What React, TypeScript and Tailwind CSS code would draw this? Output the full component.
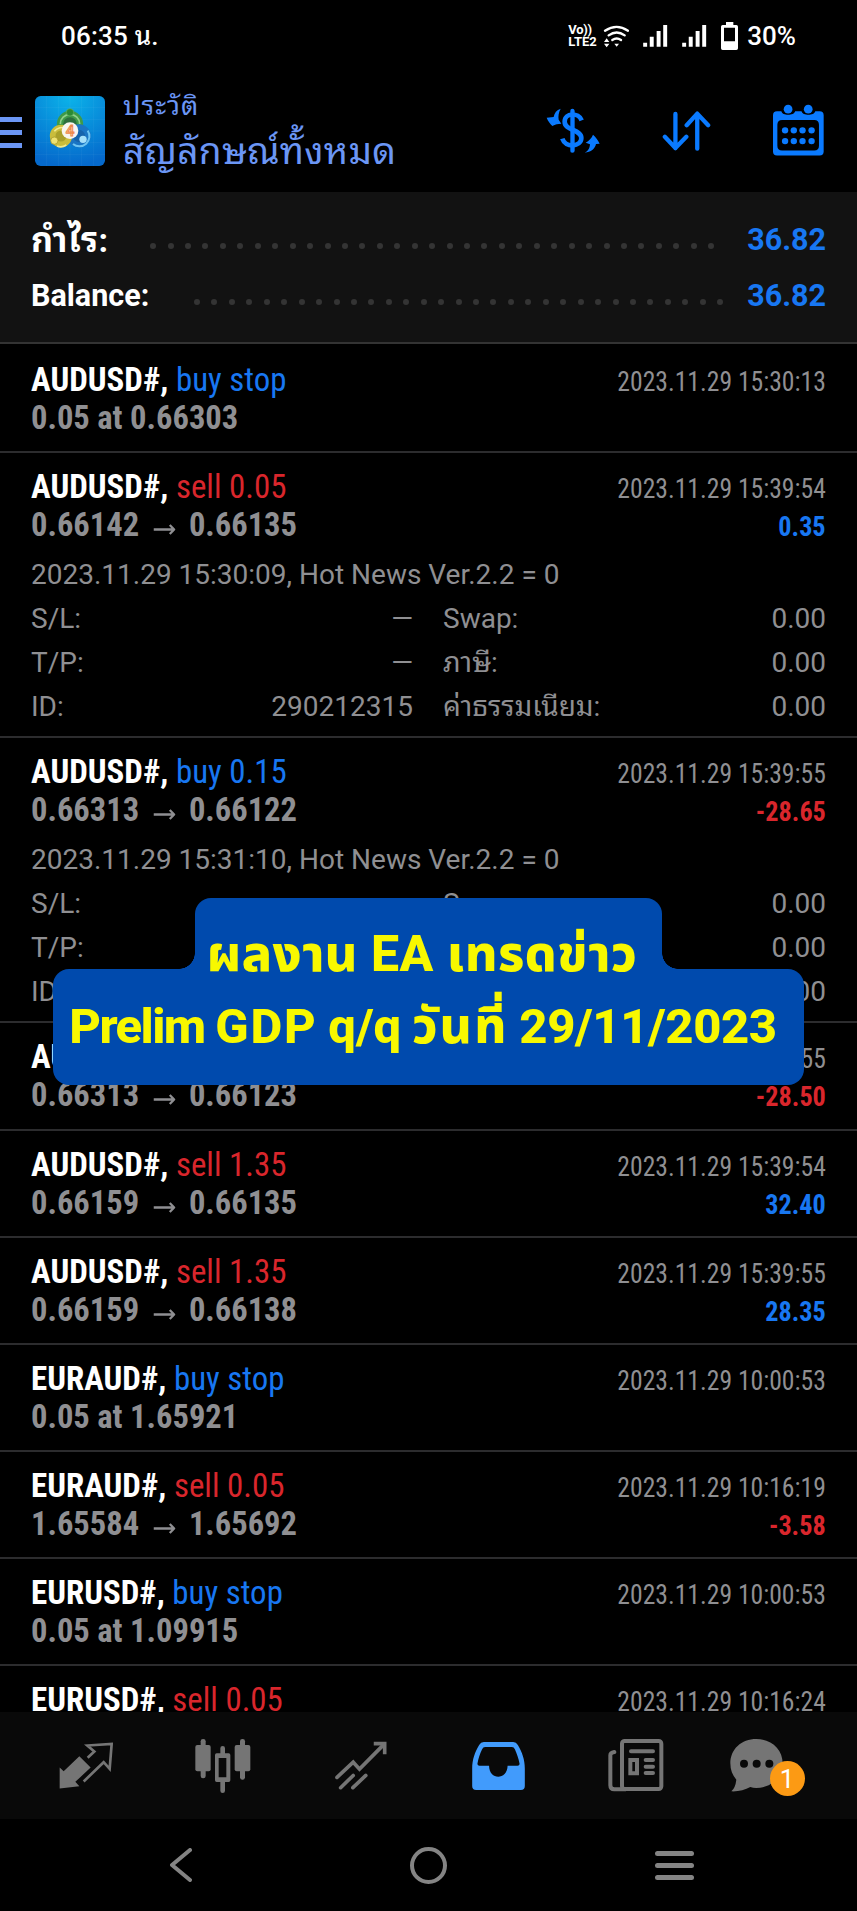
import type { ReactNode } from "react";

interface Deal {
  symbol: string;
  side: "buy" | "sell";
  action: string;
  time: string;
  price?: string;
  open?: string;
  close?: string;
  profit?: string;
  comment?: string;
  id?: string;
}

const deals: Deal[] = [
  { symbol: "AUDUSD#", side: "buy", action: "buy stop", time: "2023.11.29 15:30:13", price: "0.05 at 0.66303" },
  {
    symbol: "AUDUSD#",
    side: "sell",
    action: "sell 0.05",
    time: "2023.11.29 15:39:54",
    open: "0.66142",
    close: "0.66135",
    profit: "0.35",
    comment: "2023.11.29 15:30:09, Hot News Ver.2.2 = 0",
    id: "290212315",
  },
  {
    symbol: "AUDUSD#",
    side: "buy",
    action: "buy 0.15",
    time: "2023.11.29 15:39:55",
    open: "0.66313",
    close: "0.66122",
    profit: "-28.65",
    comment: "2023.11.29 15:31:10, Hot News Ver.2.2 = 0",
  },
  { symbol: "AUDUSD#", side: "buy", action: "buy 0.15", time: "2023.11.29 15:39:55", open: "0.66313", close: "0.66123", profit: "-28.50" },
  { symbol: "AUDUSD#", side: "sell", action: "sell 1.35", time: "2023.11.29 15:39:54", open: "0.66159", close: "0.66135", profit: "32.40" },
  { symbol: "AUDUSD#", side: "sell", action: "sell 1.35", time: "2023.11.29 15:39:55", open: "0.66159", close: "0.66138", profit: "28.35" },
  { symbol: "EURAUD#", side: "buy", action: "buy stop", time: "2023.11.29 10:00:53", price: "0.05 at 1.65921" },
  { symbol: "EURAUD#", side: "sell", action: "sell 0.05", time: "2023.11.29 10:16:19", open: "1.65584", close: "1.65692", profit: "-3.58" },
  { symbol: "EURUSD#", side: "buy", action: "buy stop", time: "2023.11.29 10:00:53", price: "0.05 at 1.09915" },
  { symbol: "EURUSD#", side: "sell", action: "sell 0.05", time: "2023.11.29 10:16:24" },
];

function StatusBar() {
  return (
    <div className="flex h-[72px] items-center justify-between pl-[61px] pr-[61px] text-[26px] font-medium leading-[72px] text-white">
      <span className="tracking-[0.2px]">06:35 น.</span>
      <div className="flex items-center">
        <div className="mr-1.5 flex w-[29px] flex-col items-start text-[13px] font-bold leading-[12px]">
          <span className="tracking-tight">Vo))</span>
          <span>LTE2</span>
        </div>
        <svg width="26" height="23" viewBox="250 68 78 69" fill="none" stroke="white" strokeWidth="7" strokeLinecap="round">
          <path d="M256 85 Q291 62 325 85M267 99 Q291 82 315 99M278 113 Q291 104 304 113" />
          <path d="M284 124h14l-7 9zM253 119l8-11 8 11zM253 124l8 11 8-11z" fill="white" stroke="none" />
        </svg>
        <SignalBars />
        <SignalBars />
        <svg className="ml-[14px]" width="17" height="28" viewBox="603 63 51 84">
          <path fill="white" fillRule="evenodd" d="M618 63h22v9h9q5 0 5 5v65q0 5-5 5h-41q-5 0-5-5V77q0-5 5-5h10zM612 80v41h33V80z" />
        </svg>
        <span className="ml-[9px]">30%</span>
      </div>
    </div>
  );
}

function SignalBars() {
  return (
    <svg className="ml-[14px]" width="25" height="22" viewBox="371 70 75 67" fill="white">
      <path d="M371 124h12v12h-12zM391 106h12v30h-12zM412 88h12v48h-12zM432 70h12v66h-12z" />
    </svg>
  );
}

function AppLogo() {
  return (
    <svg width="70" height="70" viewBox="0 0 210 210">
      <defs>
        <radialGradient id="sky" cx="50%" cy="0%" r="100%">
          <stop offset="0" stopColor="#0bb4ea" />
          <stop offset="1" stopColor="#0569cc" />
        </radialGradient>
      </defs>
      <rect width="210" height="210" rx="17" fill="url(#sky)" />
      <path d="M35 0v210M70 0v210M105 0v210M140 0v210M175 0v210M0 35h210M0 70h210M0 105h210M0 140h210M0 175h210" stroke="white" strokeOpacity=".07" strokeWidth="2" />
      <circle cx="105" cy="84" r="30" fill="#2c6f3c" stroke="#3f9a48" strokeWidth="19" />
      <path d="M76 84a29 29 0 0 1 58 0" fill="none" stroke="#8fd08a" strokeWidth="5" />
      <circle cx="132" cy="120" r="27" fill="#1563ac" stroke="#1a75c4" strokeWidth="17" />
      <path d="M158 104a30 30 0 0 1-44 40" fill="none" stroke="#6cc4f2" strokeWidth="6" />
      <circle cx="78" cy="120" r="25" fill="#a8a02a" stroke="#c9bd3c" strokeWidth="17" />
      <path d="M58 106a28 28 0 0 1 36-8M66 150q14 6 28-3" fill="none" stroke="#f0ea90" strokeWidth="5" />
      <circle cx="105" cy="49" r="11" fill="#2b8a35" stroke="#63b565" strokeWidth="2" />
      <circle cx="58" cy="134" r="11" fill="#eee271" stroke="#9f9020" strokeWidth="2" />
      <circle cx="144" cy="130" r="11" fill="#a4e0fa" />
      <circle cx="105" cy="104" r="25" fill="#f7f5f0" />
      <text x="105" y="121" textAnchor="middle" fontSize="46" fontWeight="500" fill="#fbd9b8" stroke="#ee8a4c" strokeWidth="3">
        4
      </text>
    </svg>
  );
}

function Header() {
  return (
    <div className="flex h-[120px] items-start text-[#6b96f5]">
      <div className="mt-[45px] flex w-[22px] flex-col gap-2">
        <span className="h-[5px] bg-[#6b96f5]" />
        <span className="h-[5px] bg-[#6b96f5]" />
        <span className="h-[5px] bg-[#6b96f5]" />
      </div>
      <div className="ml-[13px] mt-6">
        <AppLogo />
      </div>
      <div className="ml-[18px] mt-[13px] flex flex-col">
        <span className="text-[27px] leading-[42px] tracking-[1px]">ประวัติ</span>
        <span className="text-[37px] leading-[50px] tracking-[0.25px]">สัญลักษณ์ทั้งหมด</span>
      </div>
      <div className="ml-auto mr-[33px] flex items-start gap-[62px] pt-8 text-[#0a7aff]">
        <svg className="mt-1" width="54" height="47" viewBox="78 325 162 141" fill="currentColor">
          <path d="M185 362C176 338 134 338 134 366 134 394 184 388 184 415 184 442 136 446 127 417" fill="none" stroke="currentColor" strokeWidth="14" />
          <path d="M151 333q0-6 6-6t7 6v120q0 6-7 6t-6-6z" />
          <path d="M122 327c-12 4-19 12-21 25l-21 2c4 10 10 18 17 25 9-5 17-7 27-7l-8-12c-2-11 0-22 6-33zM194 459c11-5 15-13 16-25l-13-5c10-6 18-14 22-24 9 7 15 17 20 27l-11 1c-3 15-15 24-34 26z" />
        </svg>
        <svg className="mt-[7px]" width="49" height="40" viewBox="426 332 147 121" fill="none" stroke="currentColor" strokeWidth="13" strokeLinecap="round" strokeLinejoin="round">
          <path d="M466 341v104M434 410l32 34 33-34M532 446V341M500 375l32-35 33 35" />
        </svg>
        <svg width="51" height="52" viewBox="761 312 152 154" fill="currentColor">
          <path fillRule="evenodd" d="M773 333h13c2 14 38 14 41 0h19c3 14 38 14 41 0h13q12 0 12 12v108q0 12-12 12H773q-12 0-12-12V345q0-12 12-12zM788 359q-14 0-14 14v63q0 14 14 14h96q14 0 14-14v-63q0-14-14-14z" />
          <circle cx="806" cy="327" r="13" />
          <circle cx="866" cy="327" r="13" />
          <g>
            <circle cx="797" cy="390" r="9.5" />
            <circle cx="823" cy="390" r="9.5" />
            <circle cx="849" cy="390" r="9.5" />
            <circle cx="876" cy="390" r="9.5" />
            <circle cx="797" cy="422" r="9.5" />
            <circle cx="823" cy="422" r="9.5" />
            <circle cx="849" cy="422" r="9.5" />
            <circle cx="876" cy="422" r="9.5" />
          </g>
        </svg>
      </div>
    </div>
  );
}

function Dots({ count }: { count: number }) {
  return (
    <span className="flex gap-[11.45px]">
      {Array.from({ length: count }, (_, i) => (
        <span key={i} className="size-1.5 rounded-full bg-[#343434]" />
      ))}
    </span>
  );
}

function Summary() {
  return (
    <div className="h-[152px] border-b-2 border-[#333] bg-[#121212] px-[31px] pt-5 text-[30.5px] font-bold leading-[56px] text-white">
      <div className="flex items-center">
        <span className="text-[34px] tracking-[0.7px]">กำไร:</span>
        <div className="ml-auto mr-[33px] pt-3">
          <Dots count={33} />
        </div>
        <span className="text-[#1877f2]">36.82</span>
      </div>
      <div className="flex items-center">
        <span>Balance:</span>
        <div className="ml-auto mr-[24px] pt-3">
          <Dots count={31} />
        </div>
        <span className="text-[#1877f2]">36.82</span>
      </div>
    </div>
  );
}

function Field({ label, value }: { label: string; value?: string }) {
  return (
    <div className="flex justify-between">
      <span>{label}</span>
      <span>{value}</span>
    </div>
  );
}

function DealRow({ deal }: { deal: Deal }) {
  const expanded = deal.comment !== undefined;
  return (
    <div className={`${expanded ? "h-[285.2px]" : "h-[107.1px]"} shrink-0 border-b-2 border-[#2c2c2e] px-[31px] pt-[14px] text-[#8f8f92]`}>
      <div className="flex h-[38px] items-baseline justify-between font-['Roboto_Condensed',Roboto,sans-serif] text-[34px] leading-[38px] font-stretch-condensed">
        <span className="origin-left scale-x-[0.968]">
          <b className="text-white">{deal.symbol},</b>{" "}
          <span className={deal.side === "buy" ? "text-[#1877f2]" : "text-[#d9262c]"}>{deal.action}</span>
        </span>
        <span className="origin-right scale-x-[0.915] text-[28px]">{deal.time}</span>
      </div>
      <div className="flex h-[38px] items-baseline justify-between font-['Roboto_Condensed',Roboto,sans-serif] text-[34px] font-bold leading-[38px] font-stretch-condensed">
        <span className="flex origin-left items-baseline scale-x-[0.957]">
          {deal.price ?? deal.open}
          {deal.close && (
            <svg className="ml-[15px] mr-3.5" width="23" height="12" viewBox="0 0 23 12" fill="none" stroke="currentColor" strokeWidth="2.4">
              <path d="M0 5.5h21.5M17 1l4.5 4.5L17 10" />
            </svg>
          )}
          {deal.close}
        </span>
        <span className={`origin-right scale-x-[0.935] text-[28px] ${deal.profit?.startsWith("-") ? "text-[#d9262c]" : "text-[#1877f2]"}`}>{deal.profit}</span>
      </div>
      {expanded && (
        <div className="mt-2.5 text-[28px] leading-[44px]">
          <div>{deal.comment}</div>
          <div className="grid grid-cols-[382px_383px] gap-x-[30px]">
            <Field label="S/L:" value={deal.id && "—"} />
            <Field label="Swap:" value="0.00" />
            <Field label="T/P:" value={deal.id && "—"} />
            <Field label={deal.id ? "ภาษี:" : ""} value="0.00" />
            <Field label="ID:" value={deal.id} />
            <Field label={deal.id ? "ค่าธรรมเนียม:" : ""} value="0.00" />
          </div>
        </div>
      )}
    </div>
  );
}

function Banner() {
  return (
    <div className="absolute left-[53px] top-[898px] flex w-[751px] flex-col items-center text-center font-[Roboto,'Noto_Sans_Thai',sans-serif] text-[49px] font-extrabold leading-[71px] text-[#f8f800]">
      <div className="relative -left-[0.5px] h-[71px] w-[467px] rounded-t-2xl bg-[#004aad] pr-[12px] pt-[21px]">
        <span className="relative z-10 whitespace-nowrap text-[50px] tracking-[0.5px]">ผลงาน EA เทรดข่าว</span>
        <span className="absolute -left-4 bottom-0 size-4 bg-[radial-gradient(circle_at_0_0,transparent_15.5px,#004aad_16px)]" />
        <span className="absolute -right-4 bottom-0 size-4 bg-[radial-gradient(circle_at_100%_0,transparent_15.5px,#004aad_16px)]" />
      </div>
      <div className="h-[116px] w-full whitespace-nowrap rounded-2xl bg-[#004aad] pr-[11px] pt-[22px] [word-spacing:-1.5px]">
        <span className="tracking-[-1.6px]">Prelim</span> <span className="tracking-[1.8px]">GDP</span> q/q <span className="tracking-[2.4px]">วันที่</span>{" "}
        <span className="tracking-[-0.4px]">29/11/2023</span>
      </div>
    </div>
  );
}

function Tab({ children }: { children: ReactNode }) {
  return <div className="flex w-[137.5px] items-center justify-center text-[#757575]">{children}</div>;
}

function TabBar() {
  return (
    <div className="flex h-[107px] shrink-0 bg-[#090909] pl-[17px]">
      <Tab>
        <svg width="54" height="48" viewBox="178 246 162 141" fill="currentColor">
          <path d="M180 321l12 11 47-45 34 34-46 43 12 13-59 7z" />
          <path d="M264 292l20-19-21-18 73-5-6 75-18-20-60 58" fill="none" stroke="currentColor" strokeWidth="8" />
        </svg>
      </Tab>
      <Tab>
        <svg width="56" height="54" viewBox="586 234 168 162" fill="currentColor">
          <rect x="603" y="234" width="15" height="118" rx="7" />
          <rect x="587" y="252" width="46" height="79" rx="6" />
          <rect x="721" y="234" width="15" height="122" rx="7" />
          <rect x="705" y="252" width="47" height="79" rx="6" />
          <path d="M662 262q0-7 7-7t7 7v15h11q5 0 5 5v76q0 5-5 5h-11v26q0 7-7 7t-7-7v-26h-11q-5 0-5-5v-76q0-5 5-5h11zM657 291v58h23v-58z" fillRule="evenodd" />
        </svg>
      </Tab>
      <Tab>
        <svg width="52" height="49" viewBox="1003 239 157 146" fill="none" stroke="currentColor" strokeWidth="11" strokeLinecap="round">
          <path d="M1009 348l49-46 19 21 73-74M1020 379l38-37M1057 379l39-37" />
          <path d="M1120 246h33v32" strokeLinecap="butt" />
        </svg>
      </Tab>
      <Tab>
        <svg className="text-[#419bfc]" width="53" height="48" viewBox="134 240 159 145">
          <path
            fill="currentColor"
            fillRule="evenodd"
            d="M169 240h89q9 0 14 9c13 23 21 43 21 72v52q0 12-12 12H146q-12 0-12-12v-52c0-29 8-49 21-72q5-9 14-9zM173 255q-6 0-9 7c-7 15-11 28-14 43q-1 7 6 7h29c0 44 55 44 56 0h30q7 0 6-7c-3-15-8-28-14-43q-3-7-9-7z"
          />
        </svg>
      </Tab>
      <Tab>
        <svg width="56" height="53" viewBox="542 234 168 159" fill="none" stroke="currentColor" strokeWidth="12" strokeLinecap="round">
          <rect x="584" y="240" width="118" height="144" rx="8" />
          <path d="M561 273q-12 2-12 10v90q0 12 12 12h34M611 271h66M655 297h22M655 317h22M655 336h22" />
          <path d="M609 297h20v40h-20z" />
        </svg>
      </Tab>
      <div className="relative flex w-[132px] items-center pl-[25px] text-[#757575]">
        <svg width="53" height="53" viewBox="908 234 159 159">
          <path fill="currentColor" d="M987 234c45 0 79 31 79 73s-36 74-79 74q-10 0-18-3c-16 9-36 14-57 13q12-10 15-35c-12-14-18-29-18-49 0-42 33-73 78-73z" />
          <circle cx="950" cy="308" r="12" fill="#090909" />
          <circle cx="988" cy="308" r="12" fill="#090909" />
          <circle cx="1026" cy="308" r="12" fill="#090909" />
        </svg>
        <span className="absolute left-[65px] top-[49px] flex size-[35px] items-center justify-center rounded-full bg-[#fc9a14] text-[26px] leading-none text-white">1</span>
      </div>
    </div>
  );
}

function SystemNav() {
  return (
    <div className="flex h-[92px] shrink-0 items-center pl-[170px] text-[#848484]">
      <svg width="22" height="34" viewBox="0 0 22 34" fill="none" stroke="currentColor" strokeWidth="4" strokeLinecap="round" strokeLinejoin="round">
        <path d="M20 2L2 17l18 15" />
      </svg>
      <span className="ml-[218px] size-[37px] rounded-full border-[4.5px] border-[#848484]" />
      <div className="ml-[208px] flex w-[39px] flex-col gap-[7px]">
        <span className="h-[5px] rounded-full bg-[#848484]" />
        <span className="h-[5px] rounded-full bg-[#848484]" />
        <span className="h-[5px] rounded-full bg-[#848484]" />
      </div>
    </div>
  );
}

export default function App() {
  return (
    <div className="relative flex h-[1911px] w-[857px] flex-col overflow-hidden bg-black font-[Roboto,'Noto_Sans_Thai_Looped','Noto_Looped_Thai','Loma','Waree','Garuda',sans-serif]">
      <StatusBar />
      <Header />
      <Summary />
      <div className="flex min-h-0 flex-1 flex-col overflow-hidden pt-0.5">
        {deals.map((deal, i) => (
          <DealRow key={i} deal={deal} />
        ))}
      </div>
      <TabBar />
      <SystemNav />
      <Banner />
    </div>
  );
}
